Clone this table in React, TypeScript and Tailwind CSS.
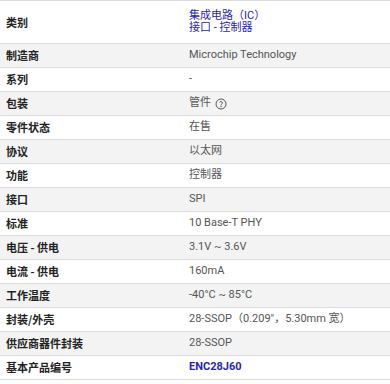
const rows: { label: string; value: React.ReactNode; tall?: boolean }[] = [
  {
    label: "类别",
    tall: true,
    value: (
      <div className="flex flex-col leading-[12px] text-[#2626b4]">
        <span>集成电路（IC）</span>
        <span>接口 - 控制器</span>
      </div>
    ),
  },
  { label: "制造商", value: "Microchip Technology" },
  { label: "系列", value: "-" },
  {
    label: "包装",
    value: (
      <span className="flex items-center gap-1">
        管件
        <svg width="12" height="12" viewBox="0 0 24 24" fill="none" stroke="#555" strokeWidth="2">
          <circle cx="12" cy="12" r="10" />
          <path d="M9.1 9a3 3 0 0 1 5.8 1c0 2-3 2.5-3 4.5" />
          <circle cx="12" cy="17.5" r="0.6" fill="#555" />
        </svg>
      </span>
    ),
  },
  { label: "零件状态", value: "在售" },
  { label: "协议", value: "以太网" },
  { label: "功能", value: "控制器" },
  { label: "接口", value: "SPI" },
  { label: "标准", value: "10 Base-T PHY" },
  { label: "电压 - 供电", value: "3.1V ~ 3.6V" },
  { label: "电流 - 供电", value: "160mA" },
  { label: "工作温度", value: "-40°C ~ 85°C" },
  { label: "封装/外壳", value: "28-SSOP（0.209\"，5.30mm 宽）" },
  { label: "供应商器件封装", value: "28-SSOP" },
  {
    label: "基本产品编号",
    value: <span className="font-bold text-[#2626b4]">ENC28J60</span>,
  },
]

export default function App() {
  return (
    <div className="w-[390px] h-[384px] bg-white font-['Roboto','Noto_Sans_CJK_SC',sans-serif]">
      <div className="border-t border-[#dcdcdc]">
        {rows.map((row, i) => (
          <div
            key={row.label}
            className={`flex items-center border-b border-[#dcdcdc] ${row.tall ? "h-[43px]" : "h-[24px]"} ${
              i % 2 === 1 ? "bg-[#f3f3f3]" : "bg-white"
            }`}
          >
            <div className="w-[189px] pl-[6px] text-[11px] font-bold text-[#222] font-['Noto_Sans_CJK_SC',sans-serif]">
              {row.label}
            </div>
            <div className="flex-1 text-[11px] text-[#555]">{row.value}</div>
          </div>
        ))}
      </div>
    </div>
  )
}
